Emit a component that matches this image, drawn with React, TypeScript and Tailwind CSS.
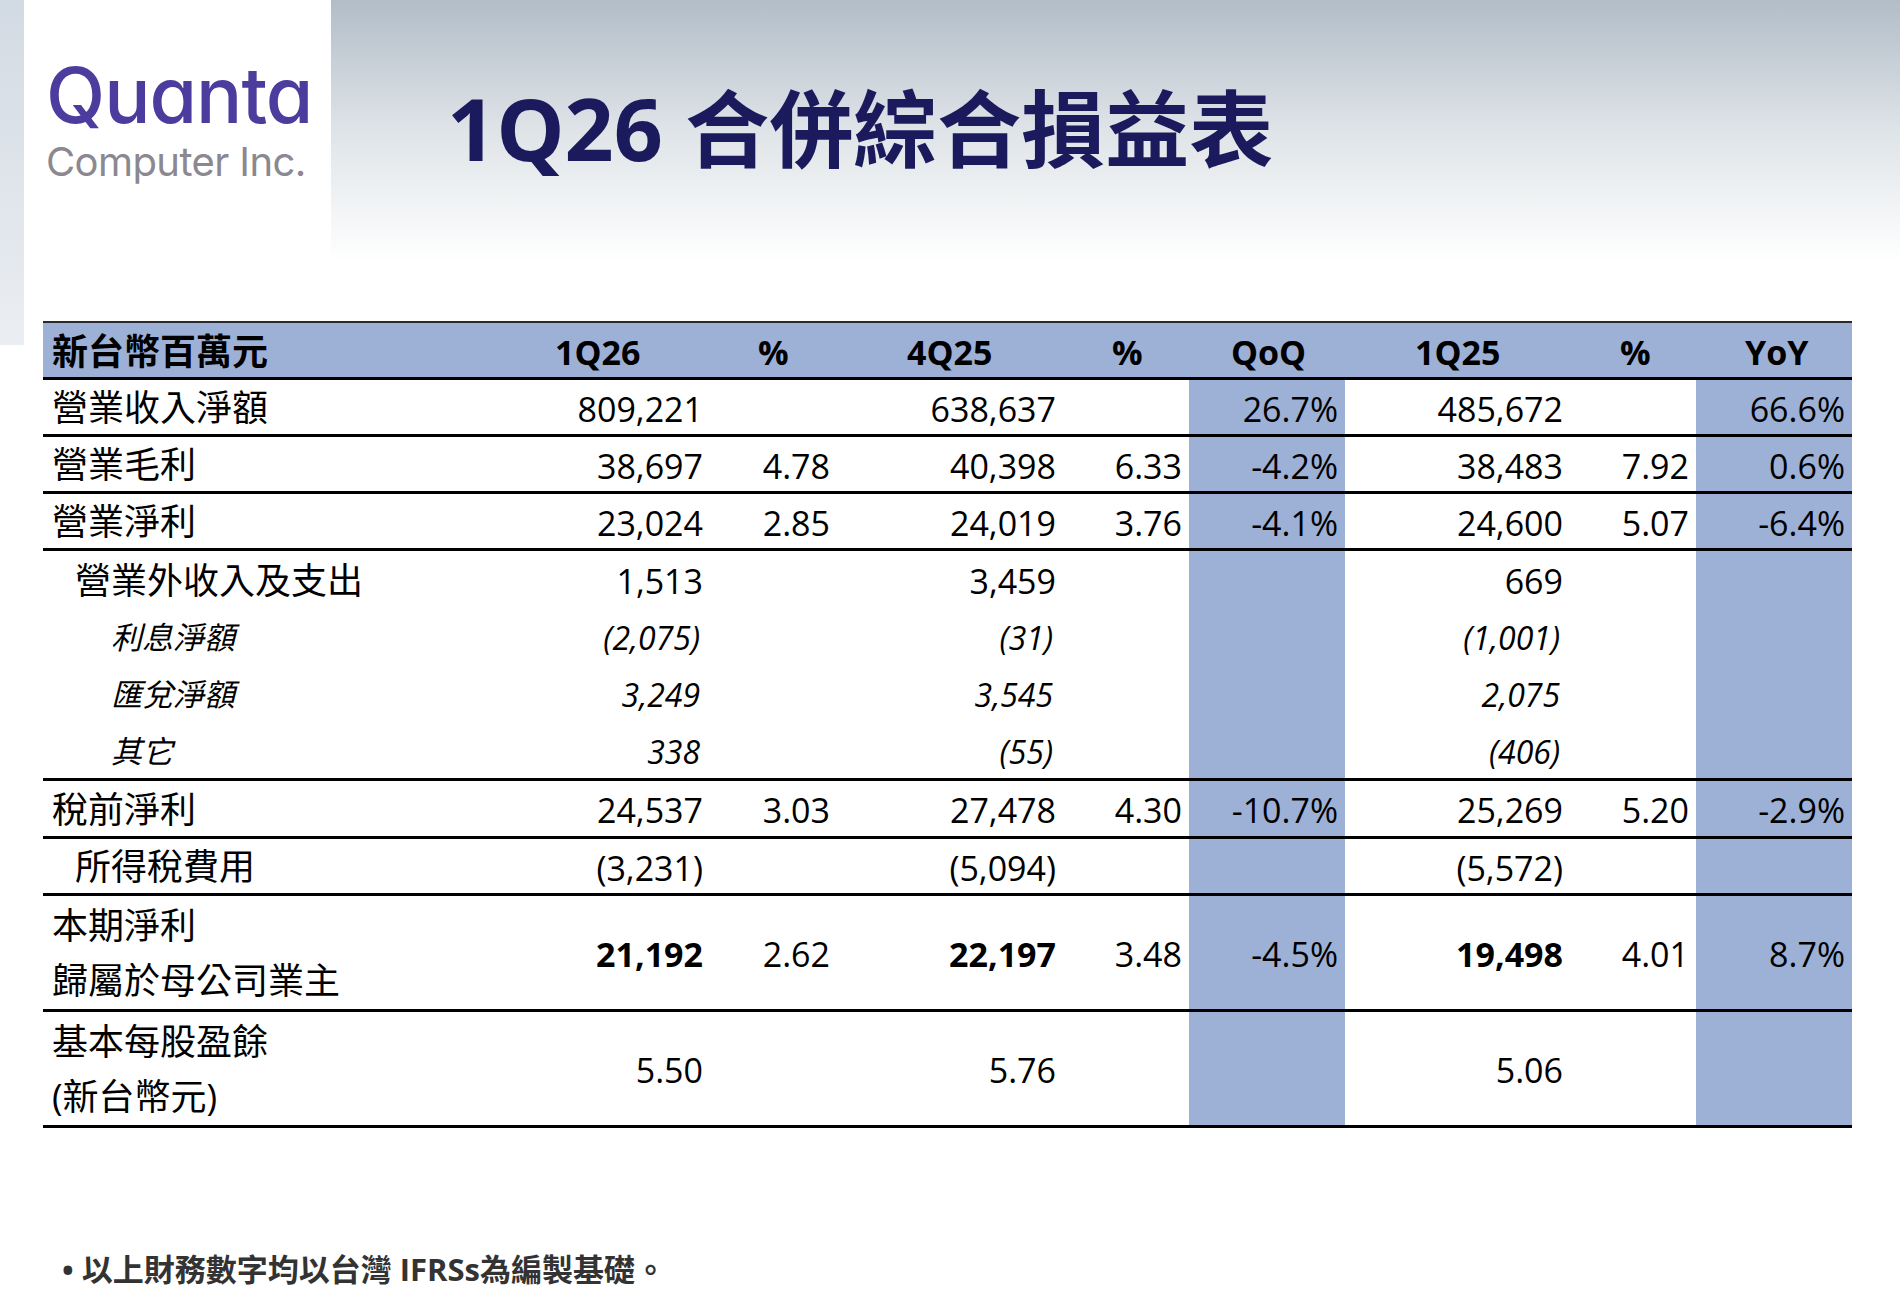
import React from 'react';

const cols = 'grid grid-cols-[497px_170px_127px_226px_126px_156px_225px_126px_156px]';

type Row = {
  label: string[];
  indent?: 'none' | 'sub' | 'item';
  italic?: boolean;
  vals: string[];
  bold?: boolean;
  h: string;
  border: boolean;
};

const rows: Row[] = [
  { label: ['營業收入淨額'], h: 'h-[57px]', vals: ['809,221', '', '638,637', '', '26.7%', '485,672', '', '66.6%'], border: true },
  { label: ['營業毛利'], h: 'h-[57px]', vals: ['38,697', '4.78', '40,398', '6.33', '-4.2%', '38,483', '7.92', '0.6%'], border: true },
  { label: ['營業淨利'], h: 'h-[57px]', vals: ['23,024', '2.85', '24,019', '3.76', '-4.1%', '24,600', '5.07', '-6.4%'], border: true },
  { label: ['營業外收入及支出'], h: 'h-[57px]', indent: 'sub', vals: ['1,513', '', '3,459', '', '', '669', '', ''], border: false },
  { label: ['利息淨額'], h: 'h-[57px]', indent: 'item', italic: true, vals: ['(2,075)', '', '(31)', '', '', '(1,001)', '', ''], border: false },
  { label: ['匯兌淨額'], h: 'h-[57px]', indent: 'item', italic: true, vals: ['3,249', '', '3,545', '', '', '2,075', '', ''], border: false },
  { label: ['其它'], h: 'h-[59px]', indent: 'item', italic: true, vals: ['338', '', '(55)', '', '', '(406)', '', ''], border: true },
  { label: ['稅前淨利'], h: 'h-[58px]', vals: ['24,537', '3.03', '27,478', '4.30', '-10.7%', '25,269', '5.20', '-2.9%'], border: true },
  { label: ['所得稅費用'], h: 'h-[57px]', indent: 'sub', vals: ['(3,231)', '', '(5,094)', '', '', '(5,572)', '', ''], border: true },
  { label: ['本期淨利', '歸屬於母公司業主'], h: 'h-[116px]', bold: true, vals: ['21,192', '2.62', '22,197', '3.48', '-4.5%', '19,498', '4.01', '8.7%'], border: true },
  { label: ['基本每股盈餘', '(新台幣元)'], h: 'h-[116px]', vals: ['5.50', '', '5.76', '', '', '5.06', '', ''], border: true },
];

// the value columns that sit on the blue band (QoQ, YoY)
const band = [4, 7];
// columns whose numbers are bold on the net-income row
const boldCols = [0, 2, 5];

function TableRow({ row }: { row: Row }) {
  const pad =
    row.indent === 'sub' ? 'pl-[32px]' : row.indent === 'item' ? 'pl-[68px]' : 'pl-[9px]';
  const twoLines = row.label.length > 1;
  return (
    <div className={`${cols} ${row.h} ${row.border ? 'border-b-[3px] border-black' : ''}`}>
      <div className={`flex flex-col justify-center pt-[2px] ${pad}`}>
        {row.label.map((l) => (
          <div
            key={l}
            className={`${twoLines ? 'h-[55px]' : ''} flex items-center ${
              row.italic ? 'italic text-[31px]' : 'text-[36px]'
            } leading-none`}
          >
            {l}
          </div>
        ))}
      </div>
      {row.vals.map((v, i) => (
        <div
          key={i}
          className={`flex items-center justify-end pt-[3px] ${row.italic ? 'pr-[10px] italic text-[32px]' : 'pr-[7px] text-[34px]'} leading-none ${
            band.includes(i) ? 'bg-[#9db1d6]' : ''
          } ${row.bold && boldCols.includes(i) ? 'font-bold' : ''}`}
        >
          {v}
        </div>
      ))}
    </div>
  );
}

export default function App() {
  return (
    <div className="w-[1900px] h-[1298px] bg-white overflow-hidden text-black [font-family:'Open_Sans','Noto_Sans_CJK_TC',sans-serif]">
      <div className="flex h-[321px] items-start">
        <div className="w-[24px] h-[345px] shrink-0 bg-linear-to-b from-[#d2dae3] to-[#ebeef2]" />
        <div className="w-[307px] h-[260px] shrink-0 bg-white pl-[22px] pt-[57px] [font-family:Inter,'Open_Sans',sans-serif] [font-feature-settings:'cv11']">
          <div className="text-[77px] leading-none font-medium text-[#4c3c9e] tracking-[-1px]">Quanta</div>
          <div className="mt-[8px] text-[40px] leading-none text-[#8b8891] tracking-[-0.6px]">Computer Inc.</div>
        </div>
        <div className="flex-1 h-[262px] bg-linear-to-b from-[#b2bdc8] via-[#dfe4e8] via-50% to-white pl-[116px] pt-[85px]">
          <h1 className="font-bold leading-none text-[#1b1a5c]">
            <span className="text-[86px]">1Q26 </span>
            <span className="text-[84px]">合併綜合損益表</span>
          </h1>
        </div>
      </div>

      <div className="ml-[43px] w-[1809px]">
        <div className={`${cols} h-[59px] bg-[#9db1d6] border-t-2 border-[#2a2a2a] border-b-[3px] border-b-black font-bold text-[34px] leading-none`}>
          <div className="flex items-center pt-[3px] pl-[9px] text-[36px]">新台幣百萬元</div>
          <div className="flex items-center pt-[3px] pl-[15px]">1Q26</div>
          <div className="flex items-center pt-[3px] pl-[48px]">%</div>
          <div className="flex items-center pt-[3px] pl-[70px]">4Q25</div>
          <div className="flex items-center pt-[3px] pl-[49px]">%</div>
          <div className="flex items-center pt-[3px] pl-[42px]">QoQ</div>
          <div className="flex items-center pt-[3px] pl-[70px]">1Q25</div>
          <div className="flex items-center pt-[3px] pl-[50px]">%</div>
          <div className="flex items-center pt-[3px] pl-[49px]">YoY</div>
        </div>
        {rows.map((r) => (
          <TableRow key={r.label[0]} row={r} />
        ))}
      </div>

      <div className="mt-[126px] pl-[62px] flex items-center gap-[8px] text-[31px] font-bold leading-none text-[#333333]">
        <span>•</span>
        <span>以上財務數字均以台灣 IFRSs為編製基礎。</span>
      </div>
    </div>
  );
}
